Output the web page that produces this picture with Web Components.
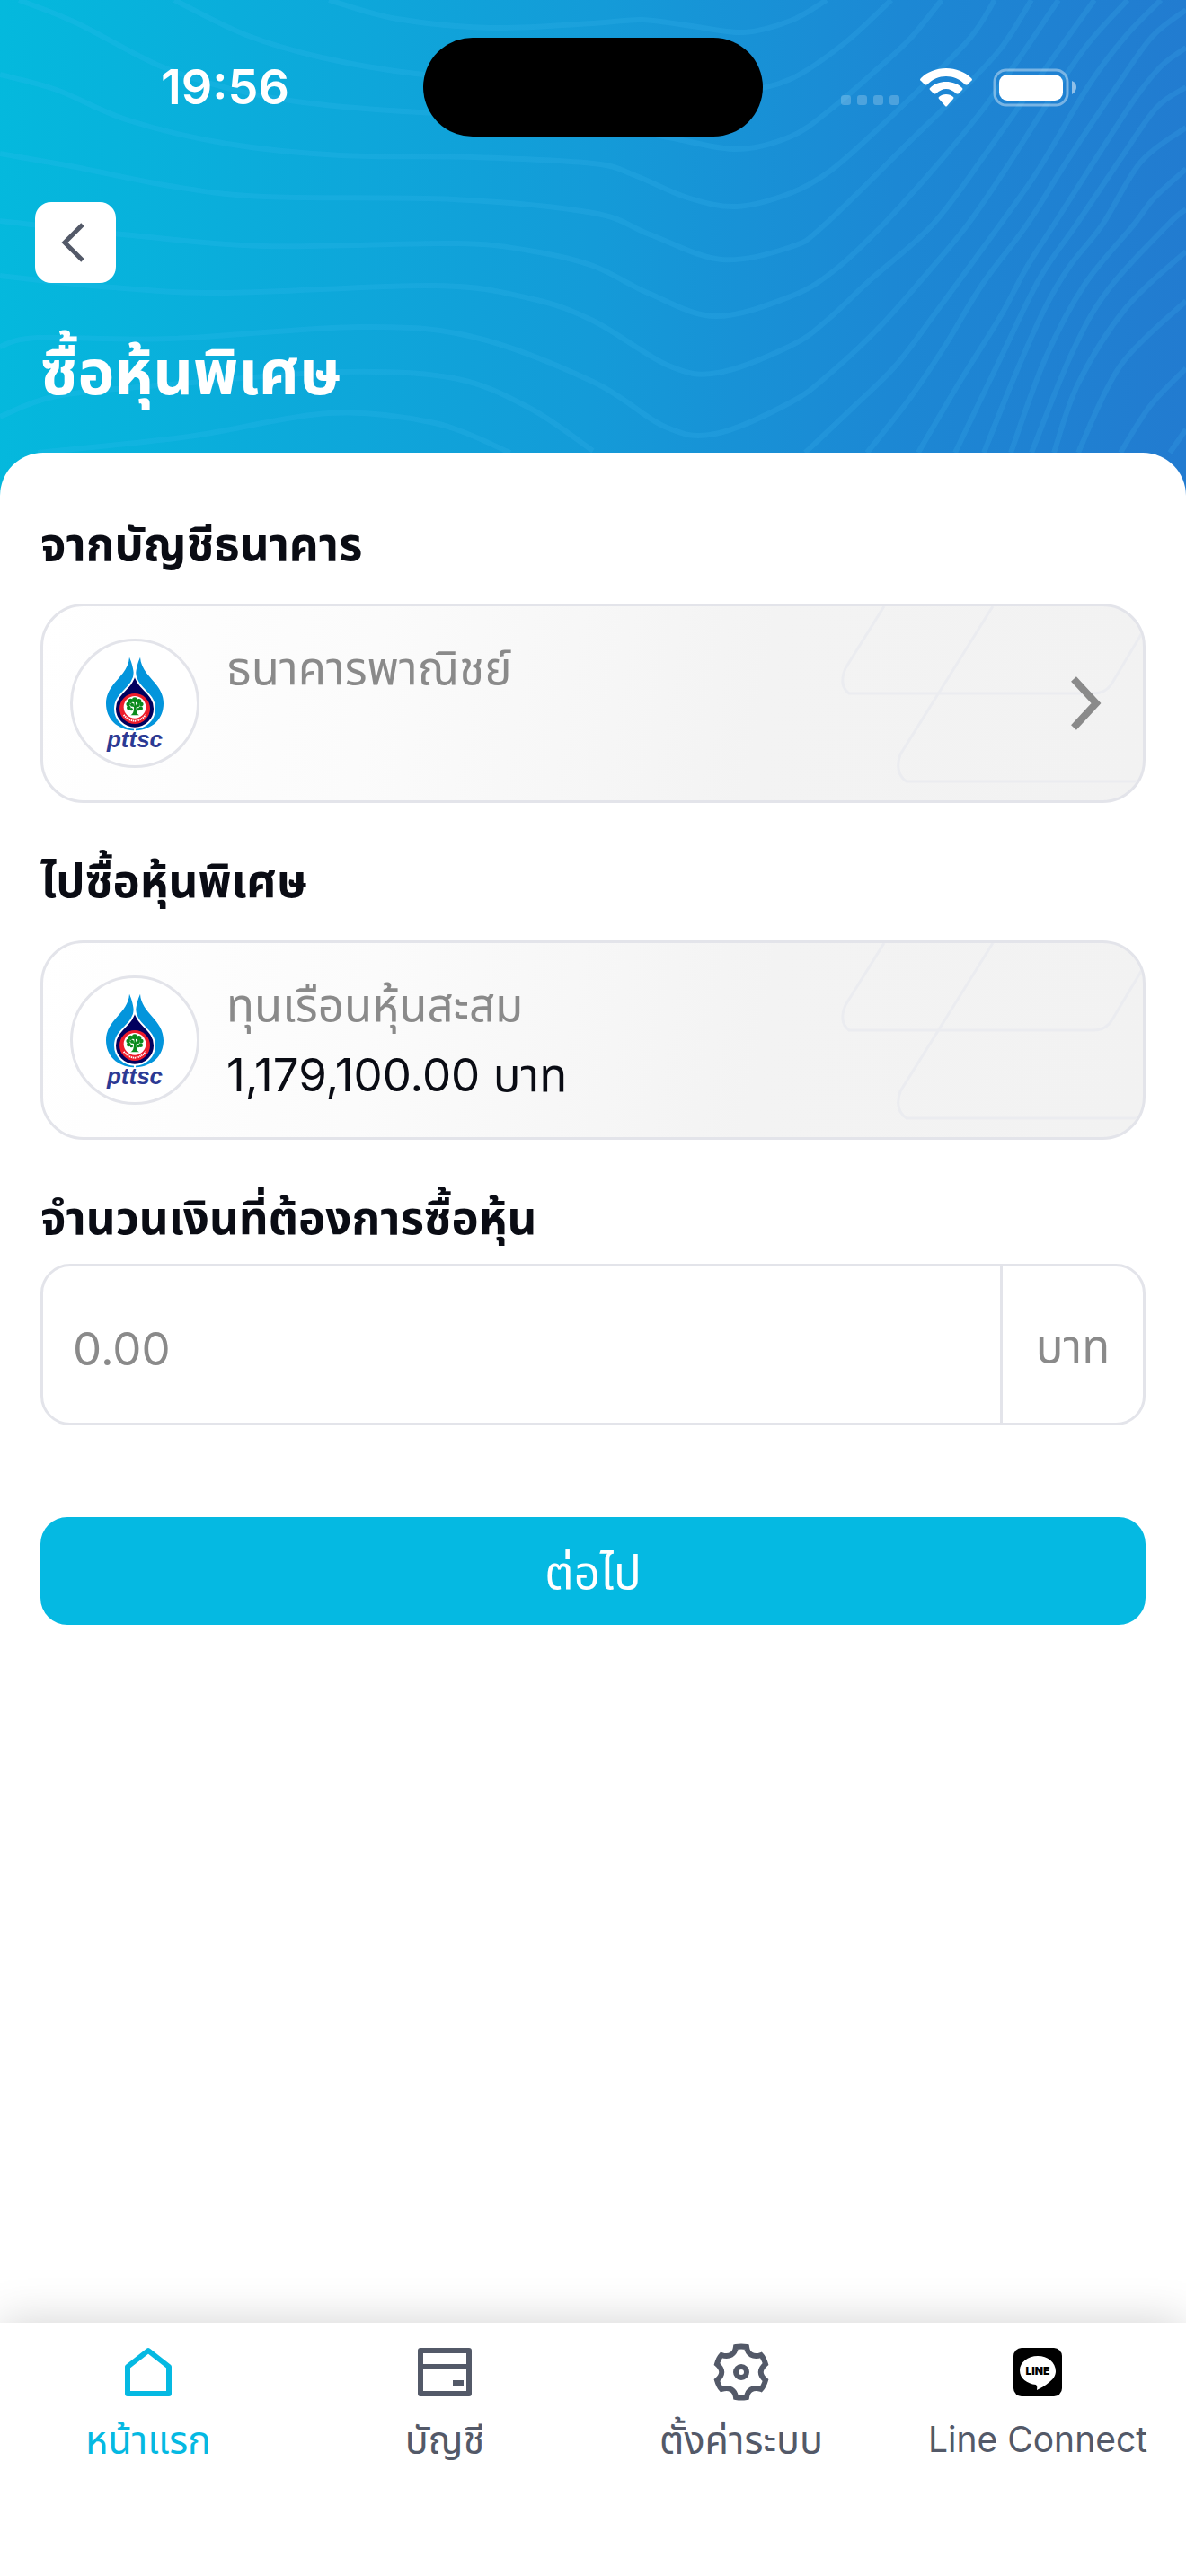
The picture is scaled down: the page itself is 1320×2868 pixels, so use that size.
<!DOCTYPE html>
<html lang="th">
<head>
<meta charset="utf-8">
<meta name="viewport" content="width=device-width, initial-scale=1">
<title>ซื้อหุ้นพิเศษ</title>
<style>
  body {
    margin: 0;
    background: #fff;
    color: #0a0c14;
    font-family: Inter, "Noto Sans Thai", "Noto Sans", sans-serif;
    font-size: 51px;
  }
</style>
</head>
<body>

<app-shell>
  <app-header slot="header" heading="ซื้อหุ้นพิเศษ" time="19:56"></app-header>

  <form-section heading="จากบัญชีธนาคาร">
    <account-card name="ธนาคารพาณิชย์" selectable></account-card>
  </form-section>
  <form-section heading="ไปซื้อหุ้นพิเศษ">
    <account-card name="ทุนเรือนหุ้นสะสม">1,179,100.00 บาท</account-card>
  </form-section>
  <amount-field label="จำนวนเงินที่ต้องการซื้อหุ้น" unit="บาท" placeholder="0.00"></amount-field>
  <primary-button>ต่อไป</primary-button>

  <tab-bar slot="footer">
    <tab-item icon="home" active>หน้าแรก</tab-item>
    <tab-item icon="account">บัญชี</tab-item>
    <tab-item icon="settings">ตั้งค่าระบบ</tab-item>
    <tab-item icon="line" lang="en">Line Connect</tab-item>
  </tab-bar>
</app-shell>

<script>
/** Contour lines behind the header, each a list of points */
const CONTOURS = [
  [[366,0],[442,21],[547,31],[660,26],[715,22],[770,29],[828,36],[880,23],[920,0]],
  [[194,0],[274,39],[358,64],[463,82],[600,92],[740,104],[820,102],[880,88],[940,48],[992,0]],
  [[21,0],[84,25],[177,73],[253,98],[337,114],[467,125],[620,130],[744,153],[820,166],[880,152],[923,123],[973,80],[1013,43],[1048,0]],
  [[0,83],[63,100],[143,134],[253,160],[379,173],[526,175],[660,182],[706,195],[765,220],[820,230],[880,215],[923,191],[967,153],[1023,100],[1080,42],[1107,0]],
  [[0,171],[84,186],[189,207],[295,219],[505,222],[660,237],[723,261],[803,289],[880,275],[918,250],[1013,157],[1063,108],[1113,55],[1148,0]],
  [[0,246],[147,262],[295,274],[505,271],[589,279],[660,296],[723,327],[796,352],[880,330],[930,300],[983,250],[1040,187],[1093,123],[1133,67],[1178,0]],
  [[0,307],[126,320],[253,326],[484,318],[589,332],[660,357],[744,407],[799,415],[880,385],[920,357],[967,313],[1038,250],[1100,167],[1173,63],[1218,0]],
  [[0,386],[42,376],[189,377],[400,364],[526,375],[660,425],[740,475],[796,483],[880,448],[927,413],[980,363],[1033,303],[1077,250],[1120,187],[1167,113],[1210,50],[1255,0]],
  [[0,464],[63,441],[189,428],[379,414],[505,421],[589,454],[660,502]],
  [[42,504],[210,486],[366,460],[484,471],[568,504]],
  [[896,504],[950,453],[997,407],[1040,350],[1113,250],[1157,187],[1213,93],[1253,40],[1292,0]],
  [[965,504],[1013,443],[1053,383],[1093,317],[1143,250],[1187,180],[1247,90],[1283,40],[1320,11]],
  [[1022,504],[1067,427],[1113,353],[1143,297],[1173,250],[1213,187],[1263,110],[1293,73],[1320,53]],
  [[1063,504],[1113,400],[1157,310],[1198,250],[1247,177],[1287,120],[1320,97]],
  [[1095,504],[1130,417],[1163,343],[1190,297],[1227,250],[1270,180],[1320,142]],
  [[1125,504],[1163,400],[1207,317],[1262,250],[1284,221],[1320,188]],
  [[1148,504],[1193,393],[1233,323],[1300,250],[1320,233]],
  [[1173,504],[1200,427],[1253,343],[1320,280]],
  [[1200,504],[1247,407],[1320,335]],
  [[1247,504],[1280,452],[1320,410]],
  [[1302,504],[1320,478]]
];

/** Icons of the tab bar */
const ICONS = {
  home: `
    <svg viewBox="0 0 66 66" fill="none" stroke="currentColor" stroke-width="6" stroke-linejoin="round">
      <path d="M10 27 33 9 56 27V57H10Z"/>
    </svg>`,
  account: `
    <svg viewBox="0 0 66 66" fill="none" stroke="currentColor" stroke-width="6" stroke-linejoin="round">
      <path d="M6 9H60V57H6ZM6 27H60"/>
      <path d="M42 45H54"/>
    </svg>`,
  settings: `
    <svg viewBox="-33 -33 66 66" fill="none" stroke="currentColor" stroke-width="6">
      <path d="M-6 -28Q0 -29 6 -28C7 -20 13 -16 22 -19Q25 -16 27 -9C20 -3 20 3 27 9Q25 16 22 19C13 16 7 20 6 28Q0 29 -6 28C-7 20 -13 16 -22 19Q-25 16 -27 9C-20 3 -20 -3 -27 -9Q-25 -16 -22 -19C-13 -16 -7 -20 -6 -28Z"/>
      <circle r="6"/>
    </svg>`,
  line: `
    <svg viewBox="0 0 66 66">
      <rect x="6" y="6" width="54" height="54" rx="9" fill="#000"/>
      <path fill="#fff" d="M33 15C44 15 53 22 53 32C53 37 50 41 46 44C42 48 36 51 32 53C32 51 33 49 31 47C21 46 13 40 13 31C13 22 22 15 33 15Z"/>
      <text x="33" y="36" text-anchor="middle" font-family="Inter, sans-serif" font-weight="900" font-size="12">LINE</text>
    </svg>`
};

/** Society logo shown on the account cards */
const LOGO = `
  <svg viewBox="33 42 414 414" role="img" aria-label="pttsc">
    <g fill="#0395dc">
      <path d="M222 95C218 160 144 180 144 250C144 300 180 338 237 340V160C236 130 229 112 222 95Z"/>
      <path d="M258 95C262 160 336 180 336 250C336 300 300 338 243 340V160C244 130 251 112 258 95Z"/>
    </g>
    <path fill="#02005e" stroke="#fff" stroke-width="6" d="M240 146C243 200 306 212 306 267A66 65 0 0 1 174 267C174 212 237 200 240 146Z"/>
    <path fill="#fff" d="M237 330H243V342H237Z"/>
    <circle cx="240" cy="267" r="51" fill="#ed1c2b"/>
    <circle cx="240" cy="262" r="37" fill="#fff"/>
    <path fill="none" stroke="#fff" stroke-width="6" stroke-dasharray="4 2" d="M203 288Q240 328 277 288"/>
    <g fill="#0a8a1c">
      <path d="M237 262 226 254 229 251 238 257V245H243V257L253 248 256 251 245 263C245 278 248 285 255 289H226C234 286 237 276 237 262Z"/>
      <circle cx="240" cy="238" r="9"/><circle cx="226" cy="241" r="8"/><circle cx="254" cy="242" r="8"/>
      <circle cx="218" cy="252" r="7"/><circle cx="262" cy="252" r="7"/><circle cx="220" cy="264" r="7"/>
      <circle cx="260" cy="266" r="7"/><circle cx="231" cy="254" r="6"/><circle cx="250" cy="256" r="6"/>
      <circle cx="229" cy="269" r="5"/><circle cx="252" cy="269" r="5"/>
    </g>
    <text x="240" y="395" text-anchor="middle" fill="#2b3a94"
      font-family="'Liberation Sans', sans-serif" font-style="italic" font-weight="700" font-size="78">pttsc</text>
  </svg>`;

/**
 * Turns a list of points into a smooth SVG path.
 * @param {Array<Array<number>>} points - The points to pass through.
 * @returns {string} The path data.
 */
function smoothPath(points) {
  let d = 'M' + points[0].join(' ');
  for (let i = 0; i < points.length - 1; i++) {
    const p0 = points[i - 1] || points[i];
    const p1 = points[i];
    const p2 = points[i + 1];
    const p3 = points[i + 2] || p2;
    const c1 = [p1[0] + (p2[0] - p0[0]) / 6, p1[1] + (p2[1] - p0[1]) / 6];
    const c2 = [p2[0] - (p3[0] - p1[0]) / 6, p2[1] - (p3[1] - p1[1]) / 6];
    d += `C${c1.join(' ')} ${c2.join(' ')} ${p2.join(' ')}`;
  }
  return d;
}


/** Page frame: header, white sheet with the content, footer */
class AppShell extends HTMLElement {
  constructor() {
    super();
    this.attachShadow({ mode: 'open' });
    this.shadowRoot.innerHTML = `
      <style>
        :host {
          display: flex;
          flex-direction: column;
          min-height: 100vh;
        }
        main {
          flex: 1;
          display: flex;
          flex-direction: column;
          margin-top: -48px;
          padding: 66px 45px 48px;
          border-radius: 48px 48px 0 0;
          background: #fff;
          z-index: 1;
        }
      </style>
      <slot name="header"></slot>
      <main><slot></slot></main>
      <slot name="footer"></slot>
    `;
  }
}
customElements.define('app-shell', AppShell);


/** Phone status bar */
class StatusBar extends HTMLElement {
  constructor() {
    super();
    this.attachShadow({ mode: 'open' });
  }

  connectedCallback() {
    this.shadowRoot.innerHTML = `
      <style>
        :host {
          display: grid;
          grid-template-columns: 1fr 378px 1fr;
          align-items: center;
          padding-top: 42px;
          color: #fff;
        }
        time {
          padding-left: 30px;
          text-align: center;
          font-size: 54px;
          font-weight: 600;
          line-height: 60px;
        }
        .island {
          height: 110px;
          border-radius: 55px;
          background: #000;
        }
        .icons {
          display: flex;
          justify-content: flex-end;
          align-items: flex-end;
          gap: 23px;
          padding-right: 121px;
        }
        .signal {
          display: flex;
          gap: 7px;
          padding-bottom: 2px;
        }
        .signal i {
          width: 11px;
          height: 11px;
          border-radius: 3px;
          background: rgba(255, 255, 255, .22);
        }
        svg {
          display: block;
          height: 43px;
        }
      </style>
      <time>${this.getAttribute('time')}</time>
      <div class="island"></div>
      <div class="icons">
        <div class="signal"><i></i><i></i><i></i><i></i></div>
        <svg width="58" viewBox="0 0 58 43" fill="#fff">
          <path d="M29 0C40 0 50 4 57 11Q59 13 57 14L53 18Q52 19 50 18C44 12 37 9 29 9S14 12 8 18Q6 19 5 18L1 14Q-1 13 1 11C8 4 18 0 29 0Z"/>
          <path d="M29 15C36 15 42 17 47 22Q48 23 47 24L43 28Q42 29 40 28C37 25 33 23 29 23S21 25 18 28Q16 29 15 28L11 24Q10 23 11 22C16 17 22 15 29 15Z"/>
          <path d="M29 29C32 29 35 30 37 32Q38 33 37 34L30 42Q29 43 28 42L21 34Q20 33 21 32C23 30 26 29 29 29Z"/>
        </svg>
        <svg width="94" viewBox="0 0 94 43">
          <rect x="2" y="2" width="81" height="39" rx="13" fill="none" stroke="#fff" stroke-opacity=".4" stroke-width="3"/>
          <rect x="7" y="7" width="71" height="29" rx="9" fill="#fff"/>
          <path d="M88 14Q93 16 93 21T88 29Z" fill="#fff" fill-opacity=".5"/>
        </svg>
      </div>
    `;
  }
}
customElements.define('status-bar', StatusBar);


/** Header with status bar, back button and title */
class AppHeader extends HTMLElement {
  constructor() {
    super();
    this.attachShadow({ mode: 'open' });
  }

  connectedCallback() {
    this.shadowRoot.innerHTML = `
      <style>
        :host {
          display: grid;
          background: linear-gradient(92deg, #04b9dd, #149bd8 50%, #1c88d4 75%, #227bd0);
        }
        .waves, .content {
          grid-area: 1 / 1;
          min-width: 0;
        }
        .waves {
          width: 100%;
          height: 100%;
          min-height: 0;
          contain: size;
        }
        .content {
          display: flex;
          flex-direction: column;
          padding-bottom: 90px;
        }
        button {
          display: flex;
          align-items: center;
          justify-content: center;
          width: 90px;
          height: 90px;
          margin: 73px 39px 0;
          padding: 0 6px 0 0;
          border: 0;
          border-radius: 18px;
          background: #fff;
        }
        h1 {
          margin: 51px 45px 0;
          color: #fff;
          font-size: 69px;
          font-weight: 700;
          line-height: 96px;
        }
      </style>
      <svg class="waves" viewBox="0 0 1320 552" preserveAspectRatio="none" aria-hidden="true"
        fill="none" stroke="#4cc4f5" stroke-opacity=".15" stroke-width="6">
        ${CONTOURS.map(points => `<path d="${smoothPath(points)}"/>`).join('')}
      </svg>
      <div class="content">
        <status-bar time="${this.getAttribute('time')}"></status-bar>
        <button type="button" aria-label="ย้อนกลับ">
          <svg width="30" height="48" viewBox="0 0 30 48" fill="none" stroke="#535968" stroke-width="5">
            <path d="M26 4 6 24 26 44"/>
          </svg>
        </button>
        <h1>${this.getAttribute('heading')}</h1>
      </div>
    `;
  }
}
customElements.define('app-header', AppHeader);


/** Titled section of the form */
class FormSection extends HTMLElement {
  constructor() {
    super();
    this.attachShadow({ mode: 'open' });
  }

  connectedCallback() {
    this.shadowRoot.innerHTML = `
      <style>
        :host {
          display: block;
          margin-bottom: 51px;
        }
        h2 {
          margin: 0 0 30px;
          font-size: 51px;
          font-weight: 700;
          line-height: 72px;
        }
      </style>
      <h2>${this.getAttribute('heading')}</h2>
      <slot></slot>
    `;
  }
}
customElements.define('form-section', FormSection);


/** Card of an account; a button when it can be changed */
class AccountCard extends HTMLElement {
  constructor() {
    super();
    this.attachShadow({ mode: 'open' });
  }

  connectedCallback() {
    const selectable = this.hasAttribute('selectable');
    const tag = selectable ? 'button type="button"' : 'div';

    this.shadowRoot.innerHTML = `
      <style>
        :host {
          display: block;
        }
        .card {
          box-sizing: border-box;
          display: grid;
          width: 100%;
          padding: 0;
          border: 3px solid #e3e4ea;
          border-radius: 48px;
          overflow: hidden;
          background: linear-gradient(100deg, #fff, #fbfbfb 30%, #f3f3f3 65%, #f2f2f2);
          color: inherit;
          font: inherit;
          text-align: left;
        }
        .pattern, .row {
          grid-area: 1 / 1;
        }
        .pattern {
          justify-self: end;
        }
        .row {
          display: flex;
          align-items: center;
          gap: 30px;
          padding: 30px;
        }
        .logo {
          box-sizing: border-box;
          width: 144px;
          height: 144px;
          border: 3px solid #e3e4ea;
          border-radius: 50%;
          overflow: hidden;
          background: #fff;
        }
        .logo svg {
          display: block;
        }
        .text {
          flex: 1;
          min-height: 156px;
          line-height: 78px;
        }
        .name {
          color: #8a8a8a;
        }
        .chevron {
          margin-right: 15px;
        }
      </style>
      <${tag} class="card">
        <svg class="pattern" width="345" height="216" viewBox="0 0 345 216" fill="none" stroke="#ebecf0" stroke-width="3" aria-hidden="true">
          <path d="M57 0 14 69Q6 88 18 97H290Q304 97 311 85L345 28"/>
          <path d="M178 0 75 165Q68 186 82 195H345"/>
        </svg>
        <span class="row">
          <span class="logo">${LOGO}</span>
          <span class="text">
            <span class="name">${this.getAttribute('name')}</span><br>
            <slot></slot>
          </span>
          ${selectable ? `
          <svg class="chevron" width="36" height="60" viewBox="0 0 36 60" fill="none" stroke="#8a8a8a" stroke-width="8">
            <path d="M4 3 29 30 4 57"/>
          </svg>` : ''}
        </span>
      </${tag.split(' ')[0]}>
    `;
  }
}
customElements.define('account-card', AccountCard);


/** Amount input with its unit */
class AmountField extends HTMLElement {
  constructor() {
    super();
    this.attachShadow({ mode: 'open' });
  }

  connectedCallback() {
    this.shadowRoot.innerHTML = `
      <style>
        :host {
          display: block;
          margin-bottom: 102px;
        }
        label {
          display: block;
          margin-bottom: 15px;
          font-weight: 700;
          line-height: 72px;
        }
        .field {
          display: flex;
          height: 174px;
          border: 3px solid #e3e4ea;
          border-radius: 33px;
          overflow: hidden;
          color: #8a8a8a;
        }
        input {
          flex: 1;
          min-width: 0;
          padding: 9px 33px 0;
          border: 0;
          outline: 0;
          background: none;
          color: #0a0c14;
          font: inherit;
        }
        input::placeholder {
          color: #8a8a8a;
          opacity: 1;
        }
        .unit {
          display: flex;
          align-items: center;
          justify-content: center;
          width: 159px;
          padding-top: 9px;
          box-sizing: border-box;
          border-left: 3px solid #e3e4ea;
        }
      </style>
      <label for="amount">${this.getAttribute('label')}</label>
      <div class="field">
        <input id="amount" type="text" inputmode="decimal" placeholder="${this.getAttribute('placeholder')}">
        <span class="unit">${this.getAttribute('unit')}</span>
      </div>
    `;
  }
}
customElements.define('amount-field', AmountField);


/** Full width button */
class PrimaryButton extends HTMLElement {
  constructor() {
    super();
    this.attachShadow({ mode: 'open' });
    this.shadowRoot.innerHTML = `
      <style>
        :host {
          display: block;
        }
        button {
          width: 100%;
          height: 120px;
          padding: 9px 0 0;
          border: 0;
          border-radius: 30px;
          background: #05b9e2;
          color: #fff;
          font: inherit;
        }
      </style>
      <button type="button"><slot></slot></button>
    `;
  }
}
customElements.define('primary-button', PrimaryButton);


/** Bottom navigation */
class TabBar extends HTMLElement {
  constructor() {
    super();
    this.attachShadow({ mode: 'open' });
    this.shadowRoot.innerHTML = `
      <style>
        :host {
          display: block;
          background: #fff;
          box-shadow: 0 0 48px rgba(0, 0, 0, .18);
          z-index: 2;
        }
        nav {
          display: grid;
          grid-template-columns: repeat(4, 1fr);
          padding: 22px 0 122px;
        }
      </style>
      <nav><slot></slot></nav>
    `;
  }
}
customElements.define('tab-bar', TabBar);


/** Link of the bottom navigation */
class TabItem extends HTMLElement {
  constructor() {
    super();
    this.attachShadow({ mode: 'open' });
  }

  connectedCallback() {
    this.shadowRoot.innerHTML = `
      <style>
        :host {
          display: block;
          color: #535968;
          font-size: 43px;
        }
        /* Latin letters run larger than the Thai ones */
        :host(:lang(en)) {
          font-size: 39px;
        }
        :host([active]) {
          color: #05b9e2;
        }
        a {
          display: flex;
          flex-direction: column;
          align-items: center;
          gap: 12px;
          color: inherit;
          line-height: 60px;
          text-decoration: none;
          white-space: nowrap;
        }
        svg {
          display: block;
          width: 66px;
          height: 66px;
        }
      </style>
      <a href="#${this.getAttribute('icon')}">
        ${ICONS[this.getAttribute('icon')]}
        <slot></slot>
      </a>
    `;
  }
}
customElements.define('tab-item', TabItem);
</script>
</body>
</html>
